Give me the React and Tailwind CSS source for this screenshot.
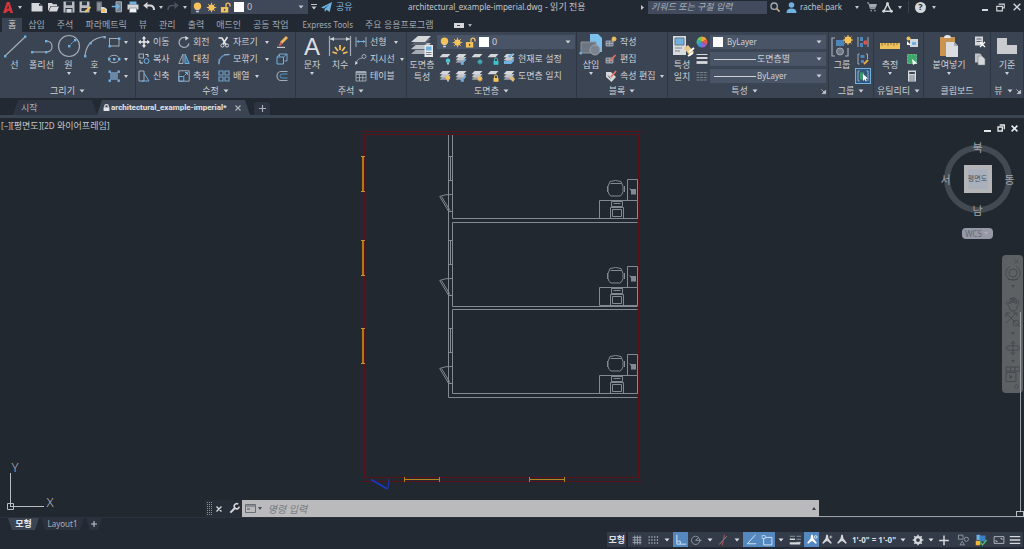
import React, { useState } from 'react';
import { clsx } from 'clsx';

const BLUE = '#6fb1e0';
const GRAY = '#a3abb6';
const LIGHT = '#d5d7da';
const GOLD = '#f5c25b';

function Svg({ children, className = 'size-3', box = 12 }) {
  return (
    <svg viewBox={`0 0 ${box} ${box}`} className={clsx('shrink-0 overflow-visible', className)} fill="none" aria-hidden="true">
      {children}
    </svg>
  );
}

function Arrow({ className = '' }) {
  return (
    <svg viewBox="0 0 6 4" className={clsx('h-1 w-1.5 shrink-0', className)} fill="currentColor" aria-hidden="true">
      <path d="M0.5 0.5h5L3 3.5z" />
    </svg>
  );
}

function TinyArrow() {
  return (
    <svg viewBox="0 0 4 3" className="h-[3px] w-1 shrink-0" fill="currentColor" aria-hidden="true">
      <path d="M0 0h4L2 3z" />
    </svg>
  );
}

/* ---------- shared glyphs ---------- */

const Bulb = ({ className }) => (
  <Svg className={className}>
    <circle cx="6" cy="4.5" r="4" fill={GOLD} />
    <path d="M4.2 8h3.6v1H4.2zM4.5 9.8h3v1.4h-3z" fill={LIGHT} />
  </Svg>
);

const Sun = ({ className }) => (
  <Svg className={className}>
    <circle cx="6" cy="6" r="3.4" fill={GOLD} />
    <path d="M6 .8v10.4M.8 6h10.4M2.3 2.3l7.4 7.4M9.7 2.3L2.3 9.7" stroke={GOLD} strokeWidth="1" />
  </Svg>
);

const OpenLock = ({ className }) => (
  <Svg className={className}>
    <path d="M6.5 6V3.5a2.2 2.2 0 0 1 4.4 0V5" stroke={GOLD} strokeWidth="1.4" />
    <rect x="1" y="5.5" width="8" height="6" fill={GOLD} />
    <rect x="4.3" y="7.5" width="1.4" height="2" fill="#3b4453" />
  </Svg>
);

/* ---------- quick access toolbar ---------- */

const quickIcons = [
  { label: '새로 만들기', icon: <path d="M.5 2h7l4 3v5.5H.5zM8 2v2.8h3.5z" fill={LIGHT} /> },
  { label: '열기', icon: <path d="M1 2h4l1 1.2h4V5H3.6L1.5 9.5H1zM4 5.6h8L10 10.5H1.8z" fill={LIGHT} /> },
  {
    label: '저장',
    icon: (
      <>
        <path d="M.5.5h11v11H.5z" fill="#b9bcc2" />
        <path d="M3 .5h6v3.7H3zM2.5 7h7v4.5h-7z" fill="#2c3440" />
        <path d="M3.5 8h5v3.5h-5z" fill={LIGHT} />
      </>
    ),
  },
  {
    label: '다른 이름으로 저장',
    icon: (
      <>
        <path d="M.5.5h10v11H.5z" fill="#b9bcc2" />
        <path d="M3 .5h5v3.7H3zM2.5 7h6v3h-6z" fill="#2c3440" />
        <path d="M6 11l5.5-5" stroke={GOLD} strokeWidth="2" />
      </>
    ),
  },
  {
    label: '웹에서 열기',
    icon: (
      <>
        <path d="M1.500.500h5.500v10H1.500z" fill="#6b7380" />
        <path d="M2.500 2h3v7h-3z" fill="#8d949e" />
        <path d="M6 6h3l3 2v4H6z" fill={LIGHT} />
        <path d="M6 8h4v3H6z" fill={GOLD} />
      </>
    ),
  },
  {
    label: '웹에 저장',
    icon: (
      <>
        <path d="M5 .8h5.500v10H5z" fill="#76808e" stroke={GRAY} />
        <path d="M.8 5.500H8M5.500 3L8 5.500 5.500 8" stroke={BLUE} strokeWidth="1.500" />
      </>
    ),
  },
  {
    label: '플롯',
    icon: (
      <>
        <path d="M2.500.500h7v3h-7z" fill={BLUE} />
        <path d="M.500 3.500h11v5H.500z" fill={LIGHT} />
        <path d="M2.500 7h7v4.500h-7z" fill="#f0f1f2" stroke="#6b7380" strokeWidth=".6" />
      </>
    ),
  },
];

function TitleBar() {
  return (
    <header className="flex h-[14px] shrink-0 items-center text-[9px] text-[#c3c6cc]">
      <button aria-label="응용프로그램 메뉴" className="flex w-7 items-center gap-1 pl-[3px]">
        <Svg className="size-[11px]">
          <path d="M0 12L4.2 0h3L11 12H8L7.2 9.2 3.8 10.8 3.4 12zM4.500 7.600l2-.9L5.500 3z" fill="#d4353b" fillRule="evenodd" />
        </Svg>
        <TinyArrow />
      </button>
      <div className="flex items-center gap-1 pl-[3px]">
        {quickIcons.map((q) => (
          <button key={q.label} aria-label={q.label} className="size-3">
            <Svg>{q.icon}</Svg>
          </button>
        ))}
        <button aria-label="명령 취소" className="size-3">
          <Svg>
            <path d="M2 4.500h5c2.500 0 4 1.500 4 4.500" stroke={LIGHT} strokeWidth="2" />
            <path d="M.2 4.500L4.500 1v7z" fill={LIGHT} />
          </Svg>
        </button>
        <TinyArrow />
        <button aria-label="명령 복구" className="size-3">
          <Svg>
            <path d="M10 4.500H5C2.500 4.500 1 6 1 9" stroke="#4b5360" strokeWidth="1.600" />
            <path d="M11.800 4.500L7.500 1v7z" fill="#4b5360" />
          </Svg>
        </button>
        <TinyArrow />
      </div>
      <label className="ml-1 flex h-[14px] w-[117px] items-center gap-px bg-[#3f4859] pr-1">
        <Bulb className="ml-px size-[11px]" />
        <Sun className="ml-0.5 size-[11px]" />
        <OpenLock className="ml-0.5 size-[11px]" />
        <span className="ml-0.5 size-[10px] bg-white" />
        <select aria-label="도면층" className="min-w-0 flex-1 appearance-none pl-0.5 text-[9px]">
          <option>0</option>
        </select>
        <Arrow />
      </label>
      <button aria-label="신속 접근 도구막대 사용자화" className="ml-[3px] flex w-1.5 flex-col items-center gap-px">
        <span className="h-px w-1.5 bg-[#c3c6cc]" />
        <Arrow />
      </button>
      <button className="ml-1 flex items-center gap-1 text-[#86bfe8]">
        <Svg className="size-[11px]">
          <path d="M0 6L12 0 9.500 11 6 8.500 4.300 11 3.800 7.500 9 3 2.800 7z" fill={BLUE} />
        </Svg>
        공유
      </button>
      <h1 className="min-w-0 flex-1 truncate text-center">
        <span className="text-[8px]">architectural_example-imperial.dwg</span> - 읽기 전용
      </h1>
      <svg viewBox="0 0 3 5" className="mr-1 h-[5px] w-[3px]" fill="currentColor"><path d="M0 0l3 2.500L0 5z" /></svg>
      <input
        type="search"
        aria-label="검색"
        placeholder="키워드 또는 구절 입력"
        className="h-[13px] w-[119px] bg-[#424b5d] pl-[3px] text-[9px] italic placeholder-[#a9afba] outline-none"
      />
      <button aria-label="찾기" className="ml-[3px]">
        <Svg className="size-[10px]">
          <circle cx="5" cy="5" r="3.800" stroke="#a8adb5" strokeWidth="1.600" />
          <path d="M8 8l3.500 3.500" stroke="#c9a57a" strokeWidth="2" />
        </Svg>
      </button>
      <button className="ml-1.5 flex items-center gap-[3px]">
        <Svg className="size-[11px]">
          <circle cx="6" cy="3.200" r="3" fill={BLUE} />
          <path d="M.5 12c0-3.500 2-5 5.500-5s5.500 1.500 5.500 5z" fill={BLUE} />
        </Svg>
        <span className="w-[52px] text-left text-[8px]">rachel.park</span>
        <TinyArrow />
      </button>
      <button aria-label="장바구니" className="ml-2">
        <Svg className="size-[10px]">
          <path d="M0 1h2l2 7h6" stroke={GRAY} strokeWidth="1.200" />
          <path d="M3 2.500h9L10.500 7H4z" fill={GRAY} />
          <circle cx="5" cy="10.500" r="1" fill={GRAY} />
          <circle cx="9.500" cy="10.500" r="1" fill={GRAY} />
        </Svg>
      </button>
      <button aria-label="Autodesk App Store" className="ml-[5px] flex items-center gap-[5px]">
        <Svg className="size-[11px]">
          <path d="M6 2L2 10h8z" stroke={LIGHT} strokeWidth="1.600" />
          <circle cx="6" cy="2" r="1.600" fill={LIGHT} />
          <circle cx="1.800" cy="10" r="1.600" fill={LIGHT} />
          <circle cx="10.200" cy="10" r="1.600" fill={LIGHT} />
        </Svg>
        <TinyArrow />
      </button>
      <span className="mx-1.5 h-3 w-px bg-[#38404c]" />
      <button aria-label="도움말" className="flex items-center gap-1.5">
        <span className="flex size-[11px] items-center justify-center rounded-full bg-[#d5d7da] text-[9px] font-bold text-[#222933]">?</span>
        <TinyArrow />
      </button>
      <div className="ml-[46px] flex items-center gap-2 pr-[3px]">
        <button aria-label="최소화" className="flex h-2 w-1.5 items-end"><span className="h-0.5 w-1.5 bg-[#d5d7da]" /></button>
        <button aria-label="이전 크기로">
          <Svg className="size-[9px]">
            <path d="M3.500 1.500h7.500v5H9M1 4.500h7.500v6H1z" stroke={LIGHT} strokeWidth="1.500" />
          </Svg>
        </button>
        <button aria-label="닫기">
          <Svg className="size-[8px]"><path d="M1 1l10 10M11 1L1 11" stroke={LIGHT} strokeWidth="2" /></Svg>
        </button>
      </div>
    </header>
  );
}

/* ---------- ribbon tabs ---------- */

const ribbonTabs = ['홈', '삽입', '주석', '파라메트릭', '뷰', '관리', '출력', '애드인', '공동 작업', 'Express Tools', '주요 응용프로그램'];

function RibbonTabs() {
  const [active, setActive] = useState('홈');

  return (
    <nav className="flex h-[18px] shrink-0 items-end pl-0.5 text-[9px] leading-[14px] text-[#a4a9b2]">
      {ribbonTabs.map((tab) => (
        <button
          key={tab}
          onClick={() => setActive(tab)}
          className={clsx(
            'h-[14px] shrink-0 px-1.5',
            tab === active && 'bg-[#3b4453] text-[#d5d7da]',
            tab === 'Express Tools' && 'ml-0.5 text-[8px]'
          )}
        >
          {tab}
        </button>
      ))}
      <button aria-label="리본 최소화" className="ml-[14px] flex h-[14px] items-center gap-1">
        <span className="flex h-[5px] w-[10px] items-center justify-center bg-[#d5d7da]">
          <span className="h-px w-[3px] bg-[#3b4453]" />
        </span>
        <TinyArrow />
      </button>
    </nav>
  );
}

/* ---------- ribbon building blocks ---------- */

function Panel({ title, width, arrow = true, launcher = false, children }) {
  return (
    <section className={clsx('flex shrink-0 flex-col border-r border-[#2e3643]', width)}>
      <div className="flex h-[52px] pt-0.5">{children}</div>
      <div className="flex h-[14px] items-center text-[9px]">
        <button className="flex flex-1 items-center justify-center gap-1">
          {title}
          {arrow && <Arrow />}
        </button>
        {launcher && (
          <button aria-label={`${title} 설정`} className="pr-0.5">
            <Svg className="size-[5px]"><path d="M1 1l6 6M11 3v8H3z" stroke="#c3c6cc" strokeWidth="2" fill="#c3c6cc" /></Svg>
          </button>
        )}
      </div>
    </section>
  );
}

function BigButton({ lines, icon, width = 'w-[27px]', arrow = false }) {
  return (
    <button className={clsx('flex shrink-0 flex-col items-center text-[9px] leading-[11px]', width)}>
      <Svg className="size-6" box={24}>{icon}</Svg>
      {lines.map((l) => (
        <span key={l} className="whitespace-nowrap pt-px">{l}</span>
      ))}
      {arrow && <span className="pt-0.5"><TinyArrow /></span>}
    </button>
  );
}

function Stack({ className, children }) {
  return <div className={clsx('flex shrink-0 flex-col gap-px', className)}>{children}</div>;
}

function Tool({ label, name, icon, arrow, gap = 'gap-[3px]', arrowGap = 'pl-1' }) {
  return (
    <button aria-label={label ? undefined : name} className={clsx('flex h-4 items-center whitespace-nowrap text-[9px]', gap)}>
      <Svg>{icon}</Svg>
      {label}
      {arrow && <span className={arrowGap}><TinyArrow /></span>}
    </button>
  );
}

/* ---------- ribbon glyphs ---------- */

const dot = (x, y) => <rect x={x - 1} y={y - 1} width="2.400" height="2.400" fill={BLUE} />;

const drawIcons = {
  line: <>{<path d="M2 22L22 3" stroke={GRAY} strokeWidth="1.200" />}{dot(2, 22)}{dot(22, 2.500)}</>,
  polyline: <><path d="M2 18h14c4 0 6-2 6-5.500S20 7 16 7" stroke={GRAY} strokeWidth="1.200" />{dot(2, 18)}{dot(16, 18)}{dot(16, 7)}</>,
  circle: <><circle cx="12" cy="12" r="10.500" stroke={GRAY} strokeWidth="1.200" /><path d="M12 12l6-6" stroke={BLUE} strokeDasharray="2 1" />{dot(12, 12)}{dot(18, 6)}</>,
  arc: <><path d="M2 22C3 11 9 4 22 2.500" stroke={GRAY} strokeWidth="1.200" />{dot(2, 22)}{dot(7.500, 9)}{dot(21.500, 3)}</>,
  rect: <><rect x="1.500" y="2.500" width="9.500" height="7.500" stroke={GRAY} />{dot(1.500, 10)}{dot(11, 2.500)}</>,
  ellipse: <><ellipse cx="6" cy="6" rx="5.300" ry="3.700" stroke={GRAY} />{dot(6, 6)}{dot(1, 6)}{dot(11, 6)}</>,
  hatch: (
    <>
      <path d="M2 2h8v8H2z" fill="#5d7899" />
      <path d="M2 4h8M2 6h8M2 8h8M4 2v8M6 2v8M8 2v8" stroke="#7f9dbf" strokeWidth=".5" />
      {dot(1.500, 1.500)}{dot(10.500, 1.500)}{dot(1.500, 10.500)}{dot(10.500, 10.500)}
    </>
  ),
};

const modifyIcons = {
  move: <path d="M6 0l2.200 2.800H6.800v2.400h2.400V3.800L12 6 9.200 8.200V6.800H6.800v2.400h1.400L6 12 3.800 9.200h1.400V6.800H2.800v1.400L0 6l2.800-2.200v1.400h2.400V2.800H3.800z" fill="#e6e7e9" />,
  copy: <><circle cx="8.500" cy="8" r="2.500" stroke={BLUE} /><rect x="1" y="1" width="4.500" height="4" stroke={GRAY} /><path d="M2 7v3h3M7.500 1.500H10v2.500" stroke={LIGHT} /></>,
  stretch: <><path d="M1 1h5v10H1z" stroke={GRAY} /><path d="M6 3l5 8H4" stroke={BLUE} /></>,
  rotate: <><path d="M8 1.800A5 5 0 1 0 11 7.500" stroke={GRAY} strokeWidth="1.300" /><path d="M7 0l4 2-3.500 2.500z" fill={LIGHT} /></>,
  mirror: <><path d="M5 1v9.500H.8z" stroke={GRAY} /><path d="M7 1v9.500h4.200z" fill="#3f6d96" stroke={BLUE} /></>,
  scale: <><path d="M.8.8h10.400v10.400H.8z" stroke={GRAY} /><path d="M.8 6.500h5v4.700h-5z" stroke={BLUE} /><path d="M6.500 5.500l3-3M7 2.500h2.500V5" stroke={BLUE} /></>,
  trim: <><path d="M.5 2h4M4 2l4 7M9.500 1L5 8" stroke="#e6e7e9" strokeWidth="1.600" /><circle cx="4.500" cy="9.500" r="1.600" stroke={LIGHT} /><circle cx="9" cy="9.500" r="1.600" stroke={LIGHT} /></>,
  fillet: <><path d="M1 11C1 5 4 1.500 11.500 1.500" stroke="#5590c0" strokeWidth="1.300" /><path d="M1 6v5.500M6 1.500h5.500" stroke={GRAY} strokeWidth=".8" /></>,
  array: <path d="M1 1h4v4H1zM7 1h4v4H7zM1 7h4v4H1zM7 7h4v4H7z" stroke="#6f9fc6" strokeWidth="1.200" />,
  erase: <><path d="M5 7l6-6" stroke="#f2b55c" strokeWidth="2.800" /><path d="M2.500 9l2.500-3 1.800 1.800-3 2.200z" fill="#e25b4e" /><path d="M1 11.300h8" stroke="#e6e7e9" /></>,
  explode: <><path d="M1 4h6.500v7H1z" stroke={BLUE} /><path d="M3.500 3.500V1H11v7H8.500M1 4l2.500-3M7.500 4L11 1" stroke="#7aa6cc" /></>,
  offset: <><path d="M11.500 1.500H5a4 4.500 0 0 0 0 9h6.500" stroke={GRAY} strokeWidth="1.200" /><path d="M11.500 4H6a2 2 0 0 0 0 4h5.500" stroke="#5590c0" /></>,
};

const sheet = (y, fill) => <path d={`M3.500 ${y}h8L8.500 ${y + 3.2}h-8z`} fill={fill} />;

function LayerGlyph({ stack = 1, badge }) {
  return (
    <>
      {stack > 1 && sheet(6.5, '#9ea3ab')}
      {stack > 1 && sheet(4, '#c2c5ca')}
      {sheet(1, LIGHT)}
      {badge}
    </>
  );
}

const badgeDot = (c) => <><circle cx="9" cy="7.800" r="2.300" fill={c} /><path d="M8.200 10h1.600v1.600H8.200z" fill={LIGHT} /></>;
const badgeLock = (c) => <><path d="M7.500 8V6.500a1.500 1.500 0 0 1 3 0V8" stroke={c} /><path d="M6.500 8h5v3.800h-5z" fill={c} /></>;
const badgeSun = (c) => <><circle cx="9" cy="8.800" r="2" fill={c} /><path d="M9 5.800v6M6 8.800h6M7 6.800l4 4M11 6.800l-4 4" stroke={c} strokeWidth=".7" /></>;
const badgeSwap = <path d="M6.500 10.500l4-4.500M6.500 8.500v2.500H9" stroke={BLUE} strokeWidth="1.400" />;

const layerRows = [
  [
    { name: '끄기', icon: <LayerGlyph badge={badgeDot('#4cc3cf')} /> },
    { name: '분리', icon: <LayerGlyph stack={2} badge={badgeSwap} /> },
    { name: '동결', icon: <LayerGlyph badge={badgeSun('#43a9b3')} /> },
    { name: '잠금', icon: <LayerGlyph badge={badgeLock('#3fc0c9')} /> },
  ],
  [
    { name: '모두 켜기', icon: <LayerGlyph stack={2} badge={badgeDot(GOLD)} /> },
    { name: '분리 해제', icon: <LayerGlyph stack={2} badge={badgeSwap} /> },
    { name: '동결 해제', icon: <LayerGlyph stack={2} badge={badgeSun(GOLD)} /> },
    { name: '잠금 해제', icon: <LayerGlyph badge={badgeLock(GOLD)} /> },
  ],
];

const badgeSunTop = <><circle cx="9" cy="3" r="2" fill={GOLD} /><path d="M9 0v6M6 3h6M7 1l4 4M11 1L7 5" stroke={GOLD} strokeWidth=".7" /></>;

const blockBase = <path d="M1 5h7v5H1zM1 7.500h7M4.500 5v5" fill="#6d7682" stroke={GRAY} strokeWidth=".9" />;

function RibbonSelect({ label, value, textSize = 'text-[9px]', children }) {
  return (
    <label className="flex h-[14px] items-center bg-[#4a5467] pr-1 text-[9px]">
      {children}
      <select aria-label={label} className={clsx('min-w-0 flex-1 appearance-none pl-px leading-[14px]', textSize)}>
        <option>{value}</option>
      </select>
      <Arrow />
    </label>
  );
}

function Ribbon() {
  return (
    <div className="flex h-[66px] shrink-0 overflow-hidden bg-[#3b4453] text-[#ced1d6]">
      <Panel title="그리기" width="w-[136px]">
        <div className="flex pl-px">
          <BigButton lines={['선']} icon={drawIcons.line} />
          <BigButton lines={['폴리선']} icon={drawIcons.polyline} />
          <BigButton lines={['원']} icon={drawIcons.circle} arrow />
          <BigButton lines={['호']} icon={drawIcons.arc} width="w-[25px]" arrow />
        </div>
        <Stack className="pl-px">
          <Tool name="직사각형" icon={drawIcons.rect} arrow gap="gap-0" />
          <Tool name="타원" icon={drawIcons.ellipse} arrow gap="gap-0" />
          <Tool name="해치" icon={drawIcons.hatch} arrow gap="gap-0" />
        </Stack>
      </Panel>

      <Panel title="수정" width="w-[160px]">
        <Stack className="w-10 pl-0.5">
          <Tool label="이동" icon={modifyIcons.move} />
          <Tool label="복사" icon={modifyIcons.copy} />
          <Tool label="신축" icon={modifyIcons.stretch} />
        </Stack>
        <Stack className="w-10 pl-0.5">
          <Tool label="회전" icon={modifyIcons.rotate} />
          <Tool label="대칭" icon={modifyIcons.mirror} />
          <Tool label="축척" icon={modifyIcons.scale} />
        </Stack>
        <Stack className="w-[59px] pl-0.5">
          <Tool label="자르기" icon={modifyIcons.trim} arrow />
          <Tool label="모깎기" icon={modifyIcons.fillet} arrow />
          <Tool label="배열" icon={modifyIcons.array} arrow arrowGap="pl-0.5" />
        </Stack>
        <Stack className="pl-px">
          <Tool name="지우기" icon={modifyIcons.erase} />
          <Tool name="분해" icon={modifyIcons.explode} />
          <Tool name="간격띄우기" icon={modifyIcons.offset} />
        </Stack>
      </Panel>

      <Panel title="주석" width="w-[111px]">
        <BigButton
          lines={['문자']}
          width="w-8"
          arrow
          icon={<text x="12" y="21" textAnchor="middle" fill="#dcdee1" fontSize="24" fontFamily="Liberation Sans">A</text>}
        />
        <BigButton
          lines={['치수']}
          width="w-6"
          icon={
            <>
              <path d="M1.500 2v20M22.500 2v20M2 5h20" stroke={GRAY} strokeWidth="1.200" />
              <path d="M2 5l4-2v4zM22 5l-4-2v4z" fill={LIGHT} />
              <path d="M12 11v5M7 13l3 4M17 13l-3 4M4.500 18l4.500 1.500M19.500 18L15 19.500" stroke={GOLD} strokeWidth="1.700" />
            </>
          }
        />
        <Stack className="pl-[3px]">
          <Tool label="선형" arrow icon={<><path d="M1 1v10M11 1v10" stroke={GRAY} /><path d="M1.500 5.500h9" stroke={BLUE} /><path d="M1.500 5.500L4 4v3zM10.500 5.500L8 4v3z" fill={BLUE} /></>} />
          <Tool label="지시선" arrow arrowGap="pl-0.5" icon={<><path d="M1 11c1-4 2-5 6-6" stroke={GRAY} /><circle cx="9" cy="3.500" r="2" stroke={GRAY} /><path d="M0 12l.5-4L3 10z" fill={LIGHT} /></>} />
          <Tool label="테이블" icon={<><path d="M1 1.500h10v9.500H1zM1 4.500h10M1 7.700h10M4.500 4v7M7.800 4v7" stroke={GRAY} strokeWidth=".9" /><path d="M1 1.500h10v2H1z" fill={GRAY} /></>} />
        </Stack>
      </Panel>

      <Panel title="도면층" width="w-[170px]">
        <BigButton
          lines={['도면층', '특성']}
          width="w-[30px]"
          icon={
            <>
              <path d="M8 14h13l-6 6H1z" fill="#a6abb2" />
              <path d="M8 10h13l-6 6H1z" fill="#5b6370" />
              <path d="M8 9h13l-6 6H1z" fill="#bfc2c7" />
              <path d="M8 5h13l-6 6H1z" fill="#5b6370" />
              <path d="M8 2h13l-6 6H1z" fill={LIGHT} />
              <path d="M14.500 11h8.500v12h-8.500z" fill="#e6e7e9" />
              <path d="M16 12.500h5.500v4H16z" fill={BLUE} />
              <path d="M16 18.500h5.500M16 20.500h5.500" stroke="#7d858f" />
            </>
          }
        />
        <div className="flex min-w-0 flex-1 flex-col gap-px pr-px">
          <div className="pt-px pb-px">
            <RibbonSelect label="현재 도면층" value="0">
              <Bulb className="ml-0.5 size-[11px]" />
              <Sun className="ml-0.5 size-[11px]" />
              <OpenLock className="ml-0.5 size-[11px]" />
              <span className="mr-0.5 ml-[3px] size-[10px] bg-white" />
            </RibbonSelect>
          </div>
          {layerRows.map((row, i) => (
            <div key={i} className="flex h-4 items-center gap-1 pl-0.5">
              {row.map((t) => <Tool key={t.name} name={t.name} icon={t.icon} />)}
              {i === 0
                ? <Tool label="현재로 설정" icon={<LayerGlyph stack={2} badge={<path d="M4 3l3 2 4-5M1 8h7l3-3v3l-3 3H1z" fill={BLUE} />} />} />
                : <Tool label="도면층 일치" icon={<LayerGlyph stack={2} badge={<path d="M6 8l3-2 3 3-2 3z" fill="#e0b878" />} />} />}
            </div>
          ))}
        </div>
      </Panel>

      <Panel title="블록" width="w-[91px]">
        <BigButton
          lines={['삽입']}
          width="w-[28px]"
          arrow
          icon={
            <>
              <path d="M11 0h8l4 4v14H11z" fill="#7cc0ee" />
              <path d="M2 8h15v11H2z" fill="#6d7682" stroke="#8c939d" />
              <circle cx="16" cy="16" r="5" fill="#7b838e" stroke="#9aa1aa" />
              {dot(1.500, 19)}
            </>
          }
        />
        <Stack>
          <Tool label="작성" icon={<>{blockBase}{badgeSunTop}</>} />
          <Tool label="편집" icon={<>{blockBase}<path d="M5 8l5.500-6" stroke="#e8705f" strokeWidth="1.800" /></>} />
          <Tool label="속성 편집" arrow arrowGap="pl-0.5" icon={<><path d="M1 2h5l5 5-4.500 5L1 7z" fill={LIGHT} /><path d="M6 7l5-6" stroke="#e8705f" strokeWidth="1.800" /><path d="M3 5.500l2.500 3" stroke="#5b6370" /></>} />
        </Stack>
      </Panel>

      <Panel title="특성" width="w-[161px]" launcher>
        <BigButton
          lines={['특성', '일치']}
          width="w-[28px]"
          icon={
            <>
              <path d="M3 2h13v19H3z" fill="#d9dbde" />
              <path d="M5 4h9v7H5z" fill={BLUE} stroke="#6d7682" />
              <path d="M5 14h7M5 17h5" stroke="#7d858f" />
              <path d="M14 14l4-3 6 7-4 4z" fill="#ecc98a" />
              <path d="M19 18l5-4M18 22l5-3" stroke="#fff" strokeWidth="2" />
            </>
          }
        />
        <Stack className="pr-0.5">
          <Tool name="색상" icon={<><path d="M6 6V.5A5.500 5.500 0 0 1 10.800 3.300z" fill="#f4a53a" /><path d="M6 6l4.800-2.700a5.500 5.500 0 0 1 0 5.400z" fill="#e8574c" /><path d="M6 6l4.800 2.700A5.500 5.500 0 0 1 6 11.500z" fill="#9a5fd0" /><path d="M6 6v5.500A5.500 5.500 0 0 1 1.200 8.700z" fill="#3e8fe0" /><path d="M6 6L1.200 8.700a5.500 5.500 0 0 1 0-5.400z" fill="#35b8a0" /><path d="M6 6L1.200 3.300A5.500 5.500 0 0 1 6 .5z" fill="#7cc653" /></>} />
          <Tool name="선가중치" icon={<><path d="M.5 1.500h11" stroke={LIGHT} strokeWidth="1" /><path d="M.5 5h11" stroke={LIGHT} strokeWidth="2" /><path d="M.5 9.500h11" stroke={LIGHT} strokeWidth="2.800" /></>} />
          <Tool name="선종류" icon={<path d="M.5 2.500h11M.5 5h11M.5 7.500h11M.5 10h11" stroke="#78808c" strokeDasharray="3 .6" />} />
        </Stack>
        <div className="flex min-w-0 flex-1 flex-col gap-[3px] pt-px pr-0.5">
          <RibbonSelect label="객체 색상" value="ByLayer" textSize="text-[8px]">
            <span className="mx-[3px] size-[10px] bg-white" />
          </RibbonSelect>
          <RibbonSelect label="선가중치" value="도면층별">
            <span className="ml-1 h-px w-[42px] bg-[#ced1d6]" />
          </RibbonSelect>
          <RibbonSelect label="선종류" value="ByLayer" textSize="text-[8px]">
            <span className="ml-1 h-px w-[42px] bg-[#ced1d6]" />
          </RibbonSelect>
        </div>
      </Panel>

      <Panel title="그룹" width="w-[45px]">
        <BigButton
          lines={['그룹']}
          width="w-[26px]"
          icon={
            <>
              <path d="M5 4H2v18h3M15 22h3v-8" stroke={GRAY} strokeWidth="1.200" />
              <path d="M6 6h8v6H6z" fill="#4d86b8" />
              <circle cx="10" cy="17.500" r="3.500" fill="#727a85" stroke={GRAY} />
              <circle cx="18" cy="6" r="3.500" fill={GOLD} />
              <path d="M18 1v10M13 6h10M14.500 2.500l7 7M21.500 2.500l-7 7" stroke={GOLD} />
            </>
          }
        />
        <Stack>
          <button aria-label="그룹 해제" className="flex h-4 w-4 items-center justify-center"><Svg><path d="M1 1v10M11 1v10" stroke={GRAY} /><path d="M3 1h3v4H3zM3 7h3v4H3z" fill="#4d86b8" /><circle cx="8.500" cy="6.500" r="2.200" fill="#d9534f" /></Svg></button>
          <button aria-label="그룹 편집" className="flex h-4 w-4 items-center justify-center"><Svg><path d="M2.500 1H1v10h1.500M9 1h1.500v5" stroke={GRAY} /><path d="M3.500 2h4v3h-4zM4 7h3v3H4z" fill="#4d86b8" /><path d="M7 11l4-4" stroke="#f2a93c" strokeWidth="1.800" /></Svg></button>
          <button aria-label="그룹 선택 켜기" className="flex h-4 w-4 items-center justify-center border border-[#6fb1e0] bg-[#31587c]"><Svg><path d="M2.500 1H1v10h1.500M9.500 1H11v10" stroke={GRAY} /><path d="M3 2.500h4v7H3z" fill="#3e9a6b" /><path d="M6 4l5 4.500-2.300.3 1 2.200-1 .5-1-2.200L6 11z" fill="#fff" /></Svg></button>
        </Stack>
      </Panel>

      <Panel title="유틸리티" width="w-[50px]">
        <BigButton
          lines={['측정']}
          width="w-[32px]"
          arrow
          icon={<><path d="M2 9h20v6H2z" fill="#efc25c" /><path d="M4 9v3M7 9v2M10 9v3M13 9v2M16 9v3M19 9v2" stroke="#7a6532" strokeWidth=".8" /></>}
        />
        <Stack>
          <Tool name="신속 선택" icon={<><path d="M4 3h8v8H4z" fill={LIGHT} /><path d="M6 6h4v3H6z" fill={BLUE} /><circle cx="2.500" cy="2.500" r="2" fill={GOLD} /><path d="M1 5l4 4H1z" fill="#fff" /></>} />
          <Tool name="모두 선택" icon={<><path d="M1.500 1.500h9v9h-9z" fill="#3fa86a" stroke="#6cc78d" strokeDasharray="2 1" /><path d="M6 6l5.500 4.500-2.500.3L7 12z" fill="#fff" /></>} />
          <Tool name="계산기" icon={<><path d="M2 .5h8v11H2z" fill={LIGHT} /><path d="M3.200 2h5.600v2H3.200z" fill="#3b4453" /><path d="M3.500 6h5M3.500 8h5M3.500 10h5" stroke="#3b4453" strokeDasharray="1.200 .7" /></>} />
        </Stack>
      </Panel>

      <Panel title="클립보드" width="w-[67px]" arrow={false}>
        <BigButton
          lines={['붙여넣기']}
          width="w-[50px]"
          arrow
          icon={
            <>
              <path d="M3 3h15v19H3z" fill="#c9944f" />
              <path d="M7 4c0-2 1-3 3.500-3S14 2 14 4z" fill="#e6e7e9" />
              <path d="M9 8h8l4 4v11H9z" fill="#dcdde0" />
              <path d="M17 8v4h4z" fill="#a6abb2" />
            </>
          }
        />
        <Stack>
          <Tool name="잘라내기" icon={<><path d="M1 .5h8v9H1z" fill={LIGHT} /><path d="M2.500 3h5M2.500 5.500h5" stroke="#5b6370" /><path d="M6 6l5 5M11 6l-5 5" stroke="#fff" strokeWidth="1.200" /></>} />
          <Tool name="클립 복사" icon={<><path d="M1 .5h5l2 2v7H1z" fill="#bfc2c7" /><path d="M4 3h4l3 3v6H4z" fill={LIGHT} stroke="#6d7682" strokeWidth=".5" /></>} />
        </Stack>
      </Panel>

      <Panel title="뷰" width="min-w-8 flex-1" launcher>
        <BigButton lines={['기준']} width="w-8" arrow icon={<path d="M2 4h10v7h10v9H2z" fill="#c9cbcf" />} />
      </Panel>
    </div>
  );
}

/* ---------- file tabs ---------- */

function FileTabs() {
  return (
    <div className="flex h-5 shrink-0 items-end border-b-[3px] border-[#3b4453] pl-[13px] text-[9px]">
      <button className="flex h-[15px] w-[84px] items-center bg-[#2d3542] pl-2 text-[#a9aeb7] [clip-path:polygon(5px_0,calc(100%_-_5px)_0,100%_100%,0_100%)]">
        시작
      </button>
      <div className="flex h-[15px] w-[153px] items-center bg-[#3b4453] pl-[6px] text-[#e2e4e7] [clip-path:polygon(5px_0,calc(100%_-_5px)_0,100%_100%,0_100%)]">
        <Svg className="size-[7px]">
          <path d="M3 6V4a3 3 0 0 1 6 0v2" stroke="#e2e4e7" strokeWidth="2" />
          <path d="M1 5.500h10V12H1z" fill="#e2e4e7" />
        </Svg>
        <button className="ml-px font-['Roboto'] text-[8px] font-bold whitespace-nowrap">architectural_example-imperial*</button>
        <button aria-label="탭 닫기" className="mr-[9px] ml-auto">
          <Svg className="size-[6px]"><path d="M1 1l10 10M11 1L1 11" stroke="#a9aeb7" strokeWidth="2.400" /></Svg>
        </button>
      </div>
      <button aria-label="새 도면" className="ml-1 flex h-[13px] w-4 items-center justify-center rounded-t bg-[#2d3542]">
        <Svg className="size-[7px]"><path d="M6 0v12M0 6h12" stroke="#a9aeb7" strokeWidth="2" /></Svg>
      </button>
    </div>
  );
}

/* ---------- drawing ---------- */

function Workstation({ y }) {
  return (
    <g transform={`translate(0 ${y})`} stroke="#858a91">
      <path d="M599.500 200.500h38v18h-38zM627.500 179.500h10v21M627.500 179.500v21" />
      <path d="M610 181.500q5.500-2 11 0q3 5 2 10q-1 4-3 4.500h-9q-2-.5-3-4.500q-1-5 2-10z" />
      <path d="M607.500 186v6M624.500 186v6M610.500 183.500h11" />
      <path d="M611.500 201.500h11v5h-11zM613.500 203.500h7M610.500 207.500h13v10.500M610.500 207.500v10.500M612.500 209.500h9v7h-9z" />
      <path d="M629 188l2 1h5v5.500h-5v-3.500z" fill="#858a91" stroke="none" />
    </g>
  );
}

function PartitionDoor({ y }) {
  return (
    <g transform={`translate(0 ${y})`} stroke="#858a91">
      <path d="M448 156.500h5M448 180.500h5M450.500 156v24M448 211.500h5" />
      <path d="M452.500 194.500q-7-.5-13 2M440 197l9 15M441.500 196.500l8.500 14" />
    </g>
  );
}

function FloorPlan() {
  return (
    <svg className="absolute inset-0 size-full" fill="none" role="img" aria-label="평면도">
      <g transform="translate(0 -118)">
        <path d="M361.500 131.500H641.500V481.500H361.500V131.500" stroke="#5c1119" />
        <path d="M364.500 134.500H638.500V477.500H364.500V134.500" stroke="#5c1119" />
        <path d="M448.500 135v262.500h189M452.500 135v83.500h185M637.500 222.500h-185v84h185M637.500 309.500h-185v84h185" stroke="#858a91" />
        {[0, 84, 172].map((y) => <PartitionDoor key={y} y={y} />)}
        {[0, 87, 175].map((y) => <Workstation key={y} y={y} />)}
        {[156, 240, 328].map((y) => (
          <g key={y}>
            <path d={`M363 ${y}v35`} stroke="#b07c16" strokeWidth="2" />
            <path d={`M361 ${y + 0.5}h4M361 ${y + 35.5}h4`} stroke="#c9912a" />
          </g>
        ))}
        {[404, 529].map((x) => (
          <path key={x} d={`M${x} 479.500h35M${x + 0.5} 477v5M${x + 35.5} 477v5`} stroke="#b8841c" />
        ))}
        <path d="M371 479.500l16.500 9.500" stroke="#1638c4" strokeWidth="2" />
        <path d="M387.500 489q1.500-5 1.500-10" stroke="#1638c4" />

        <path d="M10.500 473v34M10 506.500h34M7.500 503.500h6v6h-6z" stroke="#b9bcc1" />
        <g fill="#b9bcc1" fontFamily="Noto Sans" fontWeight="300" fontSize="13" textAnchor="middle">
          <text x="15" y="472">Y</text>
          <text x="50" y="507">X</text>
        </g>
      </g>
    </svg>
  );
}

function Crosshair() {
  return (
    <div className="pointer-events-none absolute right-0 bottom-0 flex h-[205px] w-1/5 items-end">
      <div className="h-px flex-1 bg-[#9a9ea5]" />
      <div className="flex h-full w-2 flex-col items-center">
        <div className="w-px flex-1 bg-[#9a9ea5]" />
        <div className="h-1.5 w-2 border border-[#b9bcc1]" />
      </div>
    </div>
  );
}

function ViewCube() {
  const letter = 'absolute text-[11px] leading-none text-[#a0a4aa]';
  return (
    <div className="absolute top-[22px] right-[6px] flex w-[81px] flex-col items-center">
      <div className="relative flex size-[78px] items-center justify-center">
        <div className="absolute inset-[5px] rounded-full border-[6px] border-[#434a53]" />
        <button className={clsx(letter, 'top-0.5')}>북</button>
        <button className={clsx(letter, 'bottom-0.5')}>남</button>
        <button className={clsx(letter, 'left-0.5')}>서</button>
        <button className={clsx(letter, 'right-0.5')}>동</button>
        <button className="relative flex size-7 items-center justify-center bg-[#b5b5b7]">
          <span className="flex size-5 items-center justify-center bg-[#a9b0bb] text-[7px] text-[#4a4f58]">
            평면도
          </span>
        </button>
      </div>
      <button className="mt-[10px] flex h-[11px] w-[31px] items-center gap-0.5 rounded bg-[#9799a6] pl-[3px] text-[8px] text-[#666b78]">
        WCS <span className="text-[#a9abb8]"><TinyArrow /></span>
      </button>
    </div>
  );
}

function NavBar() {
  const line = '#464b51';
  return (
    <div className="absolute top-[137px] right-px flex h-[138px] w-[21px] flex-col items-center rounded bg-[#5d6164] pt-1 text-[#464b51]">
      <span className="h-1.5 self-end pr-1"><Svg className="size-[5px]"><path d="M1 1l10 10M11 1L1 11" stroke={line} strokeWidth="2" /></Svg></span>
      <button aria-label="스티어링 휠" className="flex h-[30px] flex-col items-center gap-1">
        <Svg className="size-4" box={16}><path d="M5 1.500a7.200 7.200 0 1 0 6 0M3 14.500h10" stroke={line} /><circle cx="8" cy="8" r="4" stroke={line} /></Svg>
        <TinyArrow />
      </button>
      <button aria-label="초점이동" className="h-[17px]">
        <Svg className="size-4" box={16}><path d="M3 9L1 6.500l1.500-1L5 8V2.500h2V7 1.500h2V7 2.500h2V8l1-3.500 2 .5-2 7-2 3H6z" stroke={line} /></Svg>
      </button>
      <button aria-label="줌" className="flex h-[28px] flex-col items-center gap-1">
        <Svg className="size-4" box={16}><path d="M1 5V1h4M1 1l11 11M11 1L1 11M8 1h4v3M12.500 12.500L16 16" stroke={line} /><circle cx="11" cy="11" r="3" stroke={line} /></Svg>
        <TinyArrow />
      </button>
      <button aria-label="궤도" className="flex h-[26px] flex-col items-center gap-1">
        <Svg className="size-4" box={16}><path d="M8 1v14M8 1L6 4M8 1l2 3M8 15l-2-3M8 15l2-3" stroke={line} /><ellipse cx="8" cy="8" rx="7" ry="2.500" stroke={line} /></Svg>
        <TinyArrow />
      </button>
      <button aria-label="쇼모션">
        <Svg className="size-4" box={16}><path d="M1 1h14v4H1zM5.500 1v4M10 1v4M1 6.500h10v9H1z" stroke={line} /><path d="M4.500 8.500v4.500L8 11z" fill={line} /></Svg>
      </button>
      <span className="mt-auto self-end pr-1 pb-1"><Svg className="size-[5px]"><circle cx="6" cy="6" r="4.500" stroke={line} strokeWidth="2" /></Svg></span>
    </div>
  );
}

function CommandLine() {
  return (
    <form className="absolute inset-x-1/5 bottom-0 flex h-[17px] items-center bg-[#272d37]" onSubmit={(e) => e.preventDefault()}>
      <svg viewBox="0 0 5 13" className="ml-0.5 h-[13px] w-[5px]" aria-hidden="true">
        <path d="M.5 0v13M2.500 0v13M4.500 0v13" stroke="#8b9097" strokeDasharray="1 1" />
      </svg>
      <button type="button" aria-label="명령행 닫기" className="ml-1">
        <Svg className="size-[6px]"><path d="M1 1l10 10M11 1L1 11" stroke={LIGHT} strokeWidth="2.800" /></Svg>
      </button>
      <button type="button" aria-label="사용자화" className="mr-0.5 ml-[7px]">
        <Svg className="size-[11px]"><path d="M1.500 10.500L7 5" stroke={LIGHT} strokeWidth="2.200" /><path d="M10 1.200A2.800 2.800 0 1 0 11.200 4" stroke={LIGHT} strokeWidth="1.800" /></Svg>
      </button>
      <div className="flex h-full flex-1 items-center bg-[#bababc] px-[3px]">
        <button type="button" aria-label="최근 명령" className="flex items-center gap-0.5 text-[#4b5058]">
          <svg viewBox="0 0 11 9" className="h-[9px] w-[11px]" fill="none"><path d="M.5.5h10v8H.5z" stroke="#6a6e75" /><path d="M1 1h9v2H1z" fill="#8a8d93" /><path d="M2 5h3" stroke="#4b5058" /></svg>
          <TinyArrow />
        </button>
        <input
          aria-label="명령 입력"
          placeholder="명령 입력"
          className="ml-1.5 h-full min-w-0 flex-1 text-[10px] italic text-[#333] placeholder-[#74777c] outline-none"
        />
        <span className="rotate-180 text-[#3b4048]"><TinyArrow /></span>
      </div>
    </form>
  );
}

function Canvas() {
  return (
    <main className="relative min-h-0 flex-1 overflow-hidden bg-[#212830]">
      <FloorPlan />
      <div className="relative flex items-center justify-between px-px pt-0.5 text-[9px] leading-3 text-[#c3c6cc]">
        <div className="flex">
          <button className="text-[8px]">[−]</button>
          <button>[평면도]</button>
          <button><span className="text-[8px]">[2D</span> 와이어프레임]</button>
        </div>
        <div className="flex items-center gap-1.5 pt-1 pr-[5px]">
          <button aria-label="뷰포트 최소화" className="flex h-2 items-end"><span className="h-0.5 w-[7px] bg-[#e6e7e9]" /></button>
          <button aria-label="뷰포트 복원"><Svg className="size-2"><path d="M4 1.500h7v6.500M1.500 4.500h6.500v6H1.500z" stroke="#e6e7e9" strokeWidth="2" /></Svg></button>
          <button aria-label="뷰포트 닫기"><Svg className="size-[7px]"><path d="M1 1l10 10M11 1L1 11" stroke="#e6e7e9" strokeWidth="2.800" /></Svg></button>
        </div>
      </div>
      <ViewCube />
      <NavBar />
      <Crosshair />
      <CommandLine />
    </main>
  );
}

/* ---------- bottom bars ---------- */

function LayoutTabs() {
  const shape = '[clip-path:polygon(0_0,100%_0,calc(100%_-_4px)_100%,4px_100%)]';
  return (
    <div className="flex h-[13px] shrink-0 gap-0.5 border-t border-[#2b323d] pl-2 text-[9px] leading-3">
      <button className={clsx('w-[31px] bg-[#3b4453] font-bold text-[#e6e7e9]', shape)}>모형</button>
      <button className={clsx('w-[43px] bg-[#2b323e] text-[8px] text-[#a9aeb7]', shape)}>Layout1</button>
      <button aria-label="새 배치" className={clsx('flex w-4 items-center justify-center bg-[#2b323e]', shape)}>
        <Svg className="size-[6px]"><path d="M6 0v12M0 6h12" stroke="#c3c6cc" strokeWidth="2.200" /></Svg>
      </button>
    </div>
  );
}

const person = 'M7 1h2l1 5 4.500 6-1.500 1-4-3.500h-2L3 13l-1.500-1L6 6z';

const statusItems = [
  { name: '그리드', w: 'w-[17px]', icon: <path d="M5 2v12M8.500 2v12M12 2v12M2 4.500h12M2 8h12M2 11.500h12" stroke={GRAY} strokeWidth="1.200" /> },
  { name: '스냅', w: 'w-4', icon: <path d="M2 4h13M2 8h13M2 12h13" stroke={GRAY} strokeWidth="1.700" strokeDasharray="1.700 2" /> },
  { name: '스냅 옵션', w: 'w-3', arrow: true },
  { name: '직교', w: 'w-[15px]', on: true, icon: <path d="M2.500 1v12.500H15M2.500 9.500H7v4" stroke="#d3e3f3" strokeWidth="1.300" /> },
  { name: '극좌표', w: 'w-4', icon: <><circle cx="7.500" cy="8.500" r="5.500" stroke={GRAY} /><path d="M7.500 8.500h8M7.500 8.500l4-4" stroke={GRAY} /></> },
  { name: '극좌표 옵션', w: 'w-[11px]', arrow: true },
  { name: '등각투영', w: 'w-4', icon: <><path d="M3 14L13 3" stroke={GRAY} /><path d="M10 1L7 15" stroke="#d05252" strokeWidth="1.200" /></> },
  { name: '등각투영 옵션', w: 'w-3', arrow: true },
  { name: '객체 스냅 추적', w: 'w-4', on: true, icon: <path d="M14 1L3 13h12" stroke="#d3e3f3" strokeWidth="1.300" /> },
  { name: '객체 스냅', w: 'w-4', on: true, icon: <><path d="M3.500 4.500h11v10h-11z" stroke="#d3e3f3" strokeWidth="1.300" /><path d="M1.500 2h4v4h-4z" fill="#4c86bf" stroke="#d3e3f3" /></> },
  { name: '객체 스냅 옵션', w: 'w-[11px]', arrow: true },
  { name: '선가중치', w: 'w-[18px]', icon: <><path d="M1 3h7M10 3h6M10 7h6M10 11h6" stroke={GRAY} /><path d="M1 7h7" stroke={LIGHT} strokeWidth="2" /><path d="M1 12.500h14" stroke={LIGHT} strokeWidth="3" /></> },
  { name: '주석 객체', w: 'w-[15px]', on: true, icon: <><path d={person} fill="#fff" /><circle cx="13" cy="4" r="1.800" stroke="#fff" /></> },
  { name: '자동 축척', w: 'w-[15px]', icon: <><path d={person} fill={LIGHT} /><path d="M13 2v4M11 4h4" stroke={LIGHT} /></> },
  { name: '주석 축척', w: 'w-[15px]', icon: <path d={person} fill={LIGHT} /> },
];

const statusTail = [
  { name: '작업공간', w: 'w-[17px]', icon: <><circle cx="8" cy="8" r="4" stroke={LIGHT} strokeWidth="3" /><path d="M8 1v3M8 12v3M1 8h3M12 8h3M3 3l2 2M11 11l2 2M13 3l-2 2M3 13l2-2" stroke={LIGHT} strokeWidth="2" /></> },
  { name: '작업공간 옵션', w: 'w-[9px]', arrow: true },
  { name: '주석 모니터', w: 'w-[18px]', icon: <path d="M8 2v13M1.500 8.500h13" stroke={LIGHT} strokeWidth="2" /> },
  { name: '객체 분리', w: 'w-[19px]', icon: <><path d="M2 1.500h6v5.500H2zM7 9.500l3 5H4z" stroke={GRAY} /><circle cx="12.500" cy="7" r="2.800" stroke={GRAY} /></> },
  { name: '하드웨어 가속', w: 'w-[18px]', icon: <><path d="M2 1h5v7H2z" fill={BLUE} /><path d="M6 2h8v8H6z" fill="#3a7fc0" /><path d="M1 9h6v6H1z" fill="#f2b632" /><path d="M7 11l3 3.500L15.500 8" stroke="#4cb868" strokeWidth="2" /></> },
  { name: '화면정리', w: 'w-[17px]', icon: <path d="M1.500 3.500h13v9h-13zM10 6h2v2M6 10H4V8" stroke={LIGHT} /> },
  { name: '사용자화', w: 'w-4', icon: <path d="M1 3.500h14M1 8h14M1 12.500h14" stroke={LIGHT} strokeWidth="1.800" /> },
];

function StatusButton({ item }) {
  return (
    <button
      aria-label={item.name}
      className={clsx('flex h-[15px] shrink-0 items-center justify-center', item.w, item.on ? 'bg-[#5488bf]' : 'bg-[#333b49]')}
    >
      {item.arrow ? <Arrow /> : <Svg className="size-3" box={16}>{item.icon}</Svg>}
    </button>
  );
}

function StatusBar() {
  return (
    <footer className="flex h-[19px] shrink-0 items-center justify-end pr-px text-[9px] text-[#dcdee1]">
      <button className="mr-0.5 h-[15px] bg-[#333b49] px-px font-bold">모형</button>
      {statusItems.map((item) => <StatusButton key={item.name} item={item} />)}
      <button className="flex h-[15px] w-[60px] shrink-0 items-center justify-center gap-1 bg-[#333b49] text-[8px] font-bold whitespace-nowrap">
        1'-0" = 1'-0"
        <Arrow />
      </button>
      {statusTail.map((item) => <StatusButton key={item.name} item={item} />)}
    </footer>
  );
}

export default function App() {
  return (
    <div className="flex h-screen flex-col overflow-hidden bg-[#222933] font-['Noto_Sans','Noto_Sans_CJK_KR',sans-serif]">
      <TitleBar />
      <RibbonTabs />
      <Ribbon />
      <FileTabs />
      <Canvas />
      <LayoutTabs />
      <StatusBar />
    </div>
  );
}
